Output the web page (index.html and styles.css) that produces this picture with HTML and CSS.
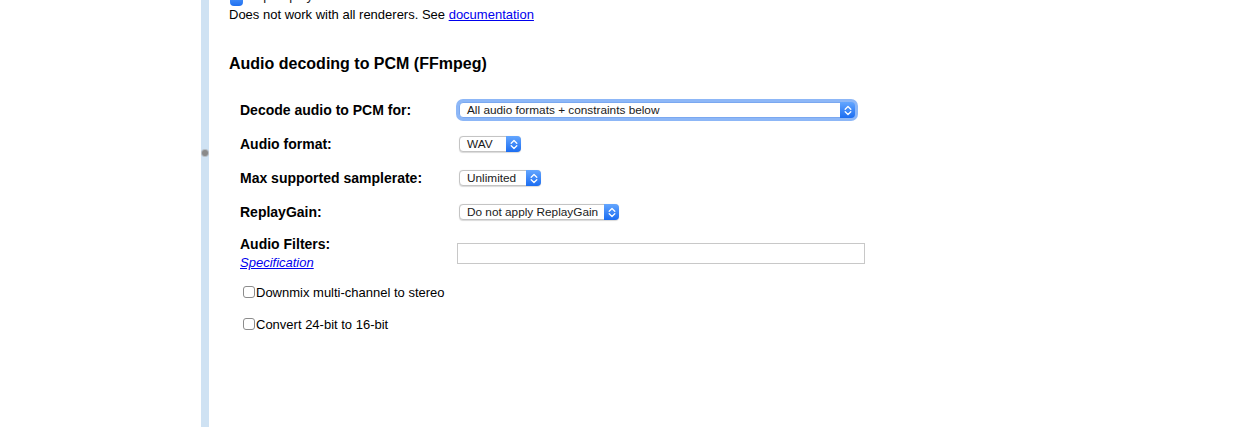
FILE: index.html
```html
<!DOCTYPE html>
<html>
<head>
<meta charset="utf-8">
<link rel="stylesheet" href="styles.css">
</head>
<body>
<div class="page">
  <div class="gutter"></div>
  <div class="strip"><span class="handle"></span></div>
  <div class="content">
    <div class="prev-row">
      <span class="cb-checked"></span><span class="prev-text">Expert player</span>
    </div>
    <div class="note">Does not work with all renderers. See <a href="#">documentation</a></div>
    <h2 class="heading">Audio decoding to PCM (FFmpeg)</h2>
    <div class="form">
      <div class="row">
        <div class="label">Decode audio to PCM for:</div>
        <div class="field">
          <div class="select focused" style="width:396px"><span class="sel-text">All audio formats + constraints below</span><span class="sel-btn"><svg width="8" height="11" viewBox="0 0 8 11"><path d="M1.2 4.2 L4 1.5 L6.8 4.2 M1.2 6.8 L4 9.5 L6.8 6.8" fill="none" stroke="#fff" stroke-width="1.3" stroke-linecap="round" stroke-linejoin="round"/></svg></span></div>
        </div>
      </div>
      <div class="row">
        <div class="label">Audio format:</div>
        <div class="field">
          <div class="select" style="width:62px"><span class="sel-text">WAV</span><span class="sel-btn"><svg width="8" height="11" viewBox="0 0 8 11"><path d="M1.2 4.2 L4 1.5 L6.8 4.2 M1.2 6.8 L4 9.5 L6.8 6.8" fill="none" stroke="#fff" stroke-width="1.3" stroke-linecap="round" stroke-linejoin="round"/></svg></span></div>
        </div>
      </div>
      <div class="row">
        <div class="label">Max supported samplerate:</div>
        <div class="field">
          <div class="select" style="width:82px"><span class="sel-text">Unlimited</span><span class="sel-btn"><svg width="8" height="11" viewBox="0 0 8 11"><path d="M1.2 4.2 L4 1.5 L6.8 4.2 M1.2 6.8 L4 9.5 L6.8 6.8" fill="none" stroke="#fff" stroke-width="1.3" stroke-linecap="round" stroke-linejoin="round"/></svg></span></div>
        </div>
      </div>
      <div class="row">
        <div class="label">ReplayGain:</div>
        <div class="field">
          <div class="select" style="width:160px"><span class="sel-text">Do not apply ReplayGain</span><span class="sel-btn"><svg width="8" height="11" viewBox="0 0 8 11"><path d="M1.2 4.2 L4 1.5 L6.8 4.2 M1.2 6.8 L4 9.5 L6.8 6.8" fill="none" stroke="#fff" stroke-width="1.3" stroke-linecap="round" stroke-linejoin="round"/></svg></span></div>
        </div>
      </div>
      <div class="row row-filters">
        <div class="label">Audio Filters:<br><a class="spec" href="#">Specification</a></div>
        <div class="field"><div class="textbox"></div></div>
      </div>
      <div class="check-row first-check"><span class="cb"></span>Downmix multi-channel to stereo</div>
      <div class="check-row"><span class="cb"></span>Convert 24-bit to 16-bit</div>
    </div>
  </div>
</div>
</body>
</html>
```

FILE: styles.css
```css
html, body {
  margin: 0;
  padding: 0;
  background: #fff;
  overflow: hidden;
}
body {
  font-family: "Liberation Sans", Arial, sans-serif;
  font-size: 13px;
  color: #000;
  width: 1258px;
  height: 427px;
}
.page {
  display: flex;
  height: 427px;
}
.gutter {
  width: 201px;
  flex: none;
}
.strip {
  width: 8px;
  flex: none;
  background: #cfe2f3;
  display: flex;
  flex-direction: column;
  align-items: center;
}
.handle {
  margin-top: 150px;
  width: 6px;
  height: 6px;
  border-radius: 50%;
  background: #8a8a8a;
  box-shadow: 0 0 0 1px #b5bcc4;
}
.content {
  padding-left: 20px;
  flex: 1;
}
.prev-row {
  height: 16px;
  margin-top: -11px;
  display: flex;
  align-items: center;
}
.cb-checked {
  width: 13px;
  height: 13px;
  margin-left: 1px;
  border-radius: 4px;
  background: linear-gradient(#5ea3ff, #1f70f0);
  flex: none;
  position: relative;
  top: 2px;
}
.prev-text {
  margin-left: 5px;
  color: #222;
  position: relative;
  top: -2px;
}
.note {
  line-height: 15px;
  height: 15px;
  margin-top: 2px;
}
.note a {
  color: #0000ee;
}
.heading {
  font-size: 16px;
  font-weight: bold;
  line-height: 18px;
  margin: 33px 0 20px 0;
}
.form {
  padding-left: 11px;
}
.row {
  display: flex;
  align-items: center;
  height: 34px;
}
.label {
  width: 217px;
  flex: none;
  font-weight: bold;
  font-size: 14px;
  line-height: 18px;
}
.field {
  display: flex;
  align-items: center;
}
.select {
  margin-left: 2px;
  height: 16px;
  box-sizing: border-box;
  border: 1px solid #c4c4c4;
  border-radius: 4px;
  background: #fff;
  display: flex;
  align-items: center;
  justify-content: space-between;
  font-size: 11.8px;
  color: #1a1a1a;
  box-shadow: 0 0.5px 1px rgba(0,0,0,0.15);
}
.select.focused {
  box-shadow: 0 0 0 3px #8db7f7;
  border-color: #7aa8f0;
}
.sel-text {
  padding-left: 7px;
  white-space: nowrap;
}
.sel-btn {
  width: 15px;
  height: 16px;
  margin-right: -1px;
  border-radius: 0 4px 4px 0;
  background: linear-gradient(#64a6ff, #1c6df1);
  display: flex;
  align-items: center;
  justify-content: center;
  flex: none;
}
.row-filters {
  height: auto;
  padding-top: 6px;
  align-items: center;
}
.spec {
  font-weight: normal;
  font-style: italic;
  font-size: 13px;
  color: #0000ee;
}
.textbox {
  width: 408px;
  height: 21px;
  box-sizing: border-box;
  border: 1px solid #c8c8c8;
  background: #fff;
}
.check-row {
  height: 32px;
  display: flex;
  align-items: center;
  padding-left: 3px;
}
.first-check {
  margin-top: 4px;
}
.cb {
  width: 12px;
  height: 12px;
  box-sizing: border-box;
  border: 1px solid #8c8c8c;
  border-radius: 3px;
  background: #fff;
  margin-right: 1px;
  flex: none;
}
```
